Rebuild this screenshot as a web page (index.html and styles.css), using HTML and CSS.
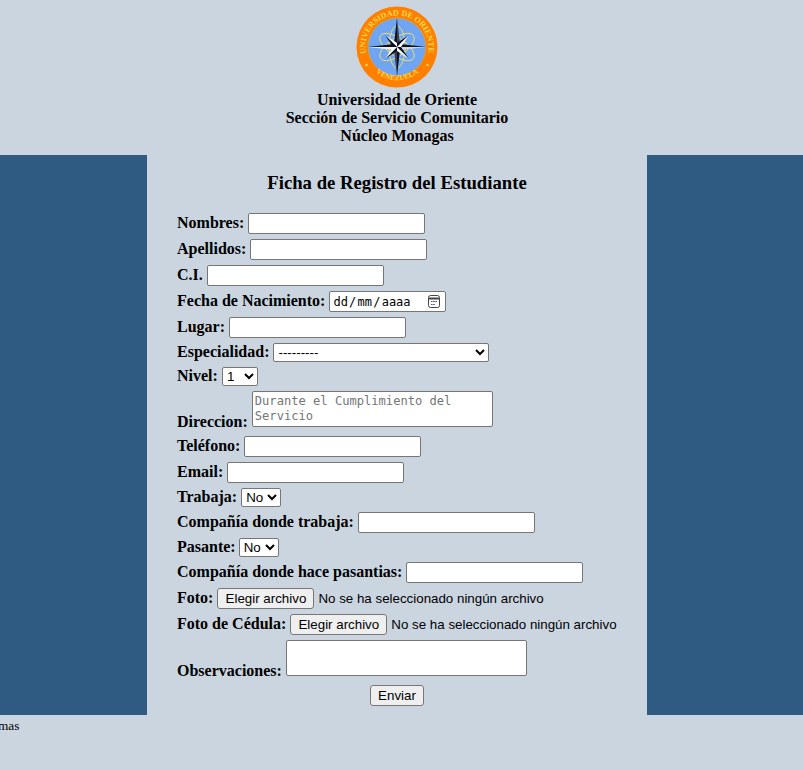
FILE: index.html
```html
<!DOCTYPE html>
<html lang="es">
<head>
  <meta charset="UTF-8">
  <meta name="viewport" content="width=device-width, initial-scale=1.0">
  <title>Ficha de Registro del Estudiante</title>
  <link rel="stylesheet" href="styles.css">
</head>
<body>
  <header class="top">
    <svg class="logo" width="82" height="82" viewBox="-1 -1 82 82">
      <defs>
        <path id="arc-top" d="M 9.2 46.5 A 31.5 31.5 0 1 1 70.8 46.5"></path>
        <path id="arc-bottom" d="M 14 60.5 A 33 33 0 0 0 66 60.5"></path>
      </defs>
      <circle cx="40" cy="40" r="40.5" fill="#ff8000"></circle>
      <circle cx="40" cy="40" r="29" fill="#6fa5f3" stroke="#e0a030" stroke-width="1"></circle>
      <text class="logo-text" font-size="8.2"><textPath href="#arc-top" startOffset="0">UNIVERSIDAD DE ORIENTE</textPath></text>
      <text class="logo-text" font-size="7.4"><textPath href="#arc-bottom" startOffset="7">VENEZUELA</textPath></text>
      <circle cx="9.5" cy="58" r="1.3" fill="#ffd84a"></circle>
      <circle cx="70.5" cy="58" r="1.3" fill="#ffd84a"></circle>
      <g fill="none" stroke="#e6e070" stroke-width="0.9">
        <ellipse cx="40" cy="40" rx="20" ry="9" transform="rotate(35 40 40)"></ellipse>
        <ellipse cx="40" cy="40" rx="20" ry="9" transform="rotate(-35 40 40)"></ellipse>
        <ellipse cx="40" cy="40" rx="21" ry="8" transform="rotate(90 40 40)"></ellipse>
      </g>
      <polygon points="40,11 37,37 40,40" fill="#0c1020"></polygon>
      <polygon points="40,11 43,37 40,40" fill="#3a4050"></polygon>
      <polygon points="69,40 43,37 40,40" fill="#0c1020"></polygon>
      <polygon points="69,40 43,43 40,40" fill="#d8d8d0"></polygon>
      <polygon points="40,69 37,43 40,40" fill="#3a4050"></polygon>
      <polygon points="40,69 43,43 40,40" fill="#0c1020"></polygon>
      <polygon points="11,40 37,37 40,40" fill="#0c1020"></polygon>
      <polygon points="11,40 37,43 40,40" fill="#f0f0e8"></polygon>
      <polygon points="28,28 40,36 40,40" fill="#fff"></polygon>
      <polygon points="28,28 36,40 40,40" fill="#0c1020"></polygon>
      <polygon points="52,28 40,36 40,40" fill="#0c1020"></polygon>
      <polygon points="52,28 44,40 40,40" fill="#fff"></polygon>
      <polygon points="52,52 44,40 40,40" fill="#0c1020"></polygon>
      <polygon points="52,52 40,44 40,40" fill="#fff"></polygon>
      <polygon points="28,52 40,44 40,40" fill="#0c1020"></polygon>
      <polygon points="28,52 36,40 40,40" fill="#fff"></polygon>
    </svg>
    <div class="top-title">Universidad de Oriente</div>
    <div class="top-title">Sección de Servicio Comunitario</div>
    <div class="top-title">Núcleo Monagas</div>
  </header>

  <div class="band">
    <main class="sheet">
      <h3>Ficha de Registro del Estudiante</h3>
      <form>
        <div class="row"><label>Nombres:</label> <input type="text" class="txt"></div>
        <div class="row"><label>Apellidos:</label> <input type="text" class="txt"></div>
        <div class="row"><label>C.I.</label> <input type="text" class="txt"></div>
        <div class="row"><label>Fecha de Nacimiento:</label> <span class="date"><span class="date-text">dd / mm / aaaa</span><svg width="12" height="13" viewBox="0 0 12 13"><rect x="0.5" y="0.5" width="11" height="12" rx="2" fill="none" stroke="#444"></rect><path d="M1 3.5h10" stroke="#444" stroke-width="2"></path><path d="M3 6.5h1.6M5.2 6.5h1.6M7.4 6.5h1.6M3 9.5h1.6M5.2 9.5h1.6" stroke="#555"></path></svg></span></div>
        <div class="row"><label>Lugar:</label> <input type="text" class="txt"></div>
        <div class="row"><label>Especialidad:</label> <select class="sel-wide"><option>---------</option></select></div>
        <div class="row"><label>Nivel:</label> <select class="sel-nivel"><option>1</option></select></div>
        <div class="row"><label>Direccion:</label> <textarea class="area-dir" placeholder="Durante el Cumplimiento del Servicio"></textarea></div>
        <div class="row"><label>Teléfono:</label> <input type="text" class="txt"></div>
        <div class="row"><label>Email:</label> <input type="text" class="txt"></div>
        <div class="row"><label>Trabaja:</label> <select class="sel-no"><option>No</option></select></div>
        <div class="row"><label>Compañía donde trabaja:</label> <input type="text" class="txt"></div>
        <div class="row"><label>Pasante:</label> <select class="sel-no sel-pasante"><option>No</option></select></div>
        <div class="row"><label>Compañía donde hace pasantias:</label> <input type="text" class="txt"></div>
        <div class="row"><label>Foto:</label> <button type="button" class="file-btn">Elegir archivo</button> <span class="nofile">No se ha seleccionado ningún archivo</span></div>
        <div class="row"><label>Foto de Cédula:</label> <button type="button" class="file-btn">Elegir archivo</button> <span class="nofile">No se ha seleccionado ningún archivo</span></div>
        <div class="row"><label>Observaciones:</label> <textarea class="area-obs"></textarea></div>
        <div class="row send"><button type="submit" class="send-btn">Enviar</button></div>
      </form>
    </main>
  </div>

  <div class="ticker"><span>Sistemas</span></div>
</body>
</html>
```

FILE: styles.css
```css
html, body {
  margin: 0;
  overflow: hidden;
}

body {
  background-color: #cbd5e0;
  font-family: "Liberation Serif", serif;
  font-size: 16px;
  color: #000;
  height: 770px;
}

.top {
  width: 794px;
  height: 155px;
  padding-top: 6px;
  box-sizing: border-box;
  text-align: center;
}

.logo {
  display: block;
  margin: 0 auto 3px;
}

.logo-text {
  font-family: "Liberation Serif", serif;
  font-weight: bold;
  fill: #ffd84a;
}

.top-title {
  font-weight: bold;
  line-height: 18px;
}

.band {
  background-color: #2f5a82;
  height: 560px;
  padding-left: 147px;
}

.sheet {
  width: 500px;
  height: 560px;
  padding: 0 30px;
  box-sizing: border-box;
  background-color: #cbd5e0;
}

h3 {
  margin: 0;
  padding-top: 17px;
  padding-bottom: 20px;
  font-size: 18.72px;
  line-height: 21px;
  text-align: center;
}

label {
  font-weight: bold;
}

.row {
  margin-bottom: 5px;
}

input, select, textarea, button, .nofile {
  font-family: "Liberation Sans", sans-serif;
  font-size: 13.33px;
}

.txt {
  width: 177px;
  height: 21px;
  box-sizing: border-box;
  padding: 1px 2px;
  border: 1px solid #767676;
  border-radius: 2px;
  background: #fff;
}

.date {
  display: inline-flex;
  align-items: center;
  justify-content: space-between;
  width: 117px;
  height: 21px;
  box-sizing: border-box;
  padding: 0 5px 0 3px;
  border: 1px solid #767676;
  border-radius: 2px;
  background: #fff;
}

.date-text {
  font-family: "DejaVu Sans Mono", monospace;
  font-size: 12px;
  word-spacing: -6px;
  white-space: pre;
}

select {
  height: 19px;
  border: 1px solid #767676;
  border-radius: 2px;
  background: #fff;
}

.sel-wide {
  width: 216px;
}

.sel-nivel {
  width: 36px;
}

.sel-no {
  width: 40px;
}

.sel-pasante {
  margin-left: -1px;
}

textarea {
  box-sizing: border-box;
  border: 1px solid #767676;
  border-radius: 2px;
  background: #fff;
  padding: 2px;
  height: 36px;
  resize: none;
}

.area-dir {
  width: 241px;
  font-family: "DejaVu Sans Mono", monospace;
  font-size: 12.1px;
  line-height: 15px;
}

.area-obs {
  width: 241px;
}

button {
  height: 21px;
  padding: 1px 6px;
  border: 1px solid #767676;
  border-radius: 3px;
  background: #efefef;
  color: #000;
}

.file-btn {
  width: 97px;
  white-space: nowrap;
}

.send {
  text-align: center;
}

.send-btn {
  width: 54px;
}

.ticker {
  margin-top: 1px;
  height: 18px;
  overflow: hidden;
}

.ticker span {
  display: inline-block;
  margin-left: -28px;
  font-size: 13.33px;
  line-height: 18px;
}
```
